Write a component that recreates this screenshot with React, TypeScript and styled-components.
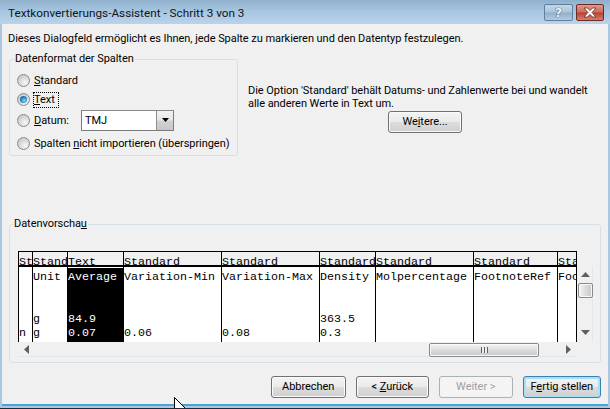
import styled, { createGlobalStyle } from "styled-components";

const GlobalStyle = createGlobalStyle`
  html, body {
    margin: 0;
    padding: 0;
    background: #a9c8e2;
  }
  * {
    box-sizing: border-box;
  }
`;

interface ColumnData {
  width: number;
  head: string;
  cells: string[];
  selected?: boolean;
}

const columns: ColumnData[] = [
  { width: 14, head: "Standard", cells: ["", "", "", "", "n"] },
  { width: 35, head: "Standard", cells: ["Unit", "", "", "g", "g"] },
  { width: 56, head: "Text", cells: ["Average", "", "", "84.9", "0.07"], selected: true },
  { width: 98, head: "Standard", cells: ["Variation-Min", "", "", "", "0.06"] },
  { width: 98, head: "Standard", cells: ["Variation-Max", "", "", "", "0.08"] },
  { width: 56, head: "Standard", cells: ["Density", "", "", "363.5", "0.3"] },
  { width: 98, head: "Standard", cells: ["Molpercentage", "", "", "", ""] },
  { width: 84, head: "Standard", cells: ["FootnoteRef", "", "", "", ""] },
  { width: 20, head: "Standard", cells: ["FootnoteRef", "", "", "", ""] },
];

const App = () => {
  return (
    <>
      <GlobalStyle />
      <Window>
        <TitleBar>
          <Title>Textkonvertierungs-Assistent - Schritt 3 von 3</Title>
          <HelpButton>?</HelpButton>
          <CloseButton>
            <svg width="16" height="11" viewBox="0 0 16 11">
              <path
                d="M2 1h3.5L8 3.6 10.5 1H14l-4 4.5L14 10h-3.5L8 7.4 5.5 10H2l4-4.5z"
                fill="#fff"
                stroke="#6e2a22"
                strokeWidth="0.8"
              />
            </svg>
          </CloseButton>
        </TitleBar>

        <Client>
          <Intro>
            Dieses Dialogfeld ermöglicht es Ihnen, jede Spalte zu markieren und den Datentyp festzulegen.
          </Intro>

          <UpperRow>
            <FormatGroup>
              <GroupTitle $offset={-3}>Datenformat der Spalten</GroupTitle>
              <RadioRow $height={20}>
                <Radio />
                <span><u>S</u>tandard</span>
              </RadioRow>
              <RadioRow $height={19}>
                <Radio $checked />
                <FocusLabel><u>T</u>ext</FocusLabel>
              </RadioRow>
              <RadioRow $height={22}>
                <Radio />
                <DateLabel><u>D</u>atum:</DateLabel>
                <Combo>
                  <ComboText>TMJ</ComboText>
                  <ComboButton>
                    <svg width="7" height="4" viewBox="0 0 7 4">
                      <path d="M0 0h7L3.5 4z" fill="#000" />
                    </svg>
                  </ComboButton>
                </Combo>
              </RadioRow>
              <RadioRow $height={24}>
                <Radio />
                <span>Spalten <u>n</u>icht importieren (überspringen)</span>
              </RadioRow>
            </FormatGroup>

            <HintColumn>
              <Hint>
                Die Option 'Standard' behält Datums- und Zahlenwerte bei und wandelt
                <br />
                alle anderen Werte in Text um.
              </Hint>
              <MoreButton>We<u>i</u>tere...</MoreButton>
            </HintColumn>
          </UpperRow>

          <PreviewGroup>
            <GroupTitle $offset={-5}>Datenvorscha<u>u</u></GroupTitle>
            <Preview>
              <Table>
                {columns.map((col, i) => (
                  <Column key={i} $width={col.width}>
                    <HeadCell>{col.head}</HeadCell>
                    <Body $selected={col.selected}>
                      {col.cells.map((c, j) => (
                        <Cell key={j}>{c}</Cell>
                      ))}
                    </Body>
                  </Column>
                ))}
              </Table>
              <VScroll>
                <svg width="9" height="5" viewBox="0 0 9 5">
                  <path d="M4.5 0L9 5H0z" fill="#5d6062" />
                </svg>
                <VThumb />
                <VSpacer />
                <svg width="9" height="5" viewBox="0 0 9 5">
                  <path d="M4.5 5L0 0h9z" fill="#5d6062" />
                </svg>
              </VScroll>
              <HScroll>
                <svg width="5" height="9" viewBox="0 0 5 9">
                  <path d="M0 4.5L5 0v9z" fill="#5d6062" />
                </svg>
                <HThumb>
                  <Gripper />
                </HThumb>
                <svg width="5" height="9" viewBox="0 0 5 9">
                  <path d="M5 4.5L0 0v9z" fill="#5d6062" />
                </svg>
              </HScroll>
            </Preview>
          </PreviewGroup>

          <Footer>
            <DialogButton $width={75}>Abbrechen</DialogButton>
            <DialogButton $width={74}>&lt; <u>Z</u>urück</DialogButton>
            <DialogButton $width={74} $disabled>Weiter &gt;</DialogButton>
            <DialogButton $width={79} $default>F<u>e</u>rtig stellen</DialogButton>
          </Footer>
        </Client>

        <Pointer width="14" height="14" viewBox="0 0 14 14">
          <path d="M0.5 0.5V14H6l2-2 3 2h3z" fill="#fff" stroke="#000" strokeWidth="1" />
        </Pointer>
      </Window>
    </>
  );
};

const uiFont = `Roboto, "Noto Sans", "Liberation Sans", sans-serif`;

const Window = styled.div`
  position: relative;
  width: 610px;
  height: 409px;
  overflow: hidden;
  display: flex;
  flex-direction: column;
  background: #a9c8e2;
  padding: 0 2px 2px 2px;
  border-bottom: 1px solid #1d2a38;
  font-family: ${uiFont};
  font-size: 11px;
  color: #000;
`;

const TitleBar = styled.div`
  height: 24px;
  margin: 0 -2px;
  padding: 4px 6px 0 8px;
  display: flex;
  align-items: flex-start;
  background: linear-gradient(to bottom, #8fb0cc 0%, #a6c5df 45%, #b9d3ea 100%);
`;

const Title = styled.div`
  flex: 1;
  padding-top: 1px;
  font-size: 11.75px;
  line-height: 17px;
  color: #10151a;
`;

const HelpButton = styled.div`
  width: 29px;
  height: 17px;
  margin-right: 3px;
  border: 1px solid #5f7f9c;
  border-radius: 2px;
  background: linear-gradient(to bottom, #c3d8ea 0%, #a9c5dc 48%, #8fb0cb 52%, #b2cbe0 100%);
  color: #eef3f7;
  font-family: "DejaVu Sans", sans-serif;
  font-size: 13px;
  font-weight: 700;
  line-height: 15px;
  text-align: center;
  text-shadow: 0 0 1px #33506a, 0 0 1px #33506a;
`;

const CloseButton = styled.div`
  width: 28px;
  height: 17px;
  border: 1px solid #6e2a22;
  border-radius: 2px;
  background: linear-gradient(to bottom, #dd9a8d 0%, #cd6a5a 48%, #b93f30 52%, #d4806f 100%);
  display: flex;
  align-items: center;
  justify-content: center;
`;

const Client = styled.div`
  flex: 1;
  display: flex;
  flex-direction: column;
  background: #f0f0f0;
  border-bottom: 2px solid #4aa3d8;
  padding: 6px 7px 0 6px;
  letter-spacing: -0.05px;
`;

const Intro = styled.div`
  height: 15px;
  padding-top: 1px;
  line-height: 15px;
  white-space: nowrap;
`;

const UpperRow = styled.div`
  display: flex;
  margin-top: 6px;
  height: 165px;
`;

const GroupBox = styled.fieldset`
  flex: none;
  margin: 0 0 0 1px;
  padding: 0;
  min-width: 0;
  border: 1px solid #d6dfe6;
  border-radius: 3px;
`;

const GroupTitle = styled.legend<{ $offset: number }>`
  margin-left: ${({ $offset }) => $offset}px;
  padding: 0 1px;
  height: 16px;
  line-height: 16px;
`;

const FormatGroup = styled(GroupBox)`
  width: 229px;
  height: 105px;
  padding: 3px 0 0 7px;
`;

const RadioRow = styled.div<{ $height: number }>`
  height: ${({ $height }) => $height}px;
  display: flex;
  align-items: center;
  white-space: nowrap;
`;

const Radio = styled.div<{ $checked?: boolean }>`
  position: relative;
  flex: none;
  width: 13px;
  height: 13px;
  margin-right: 4px;
  border-radius: 50%;
  border: 1px solid #8a8b8b;
  background: radial-gradient(circle at 65% 70%, #f6f6f6 0%, #dcdcdc 45%, #bdbdbd 100%);

  ${({ $checked }) =>
    $checked &&
    `
    &::after {
      content: "";
      position: absolute;
      left: 2px;
      top: 2px;
      width: 7px;
      height: 7px;
      border-radius: 50%;
      background: radial-gradient(circle at 60% 65%, #7fdcff 0%, #1a7fc0 55%, #0e4f80 100%);
    }
  `}
`;

const FocusLabel = styled.span`
  margin-left: -1px;
  padding: 0 0 0 1px;
  width: 26px;
  height: 16px;
  line-height: 15px;
  outline: 1px dotted #000;
  outline-offset: -1px;
`;

const DateLabel = styled.span`
  width: 47px;
`;

const Combo = styled.div`
  width: 93px;
  height: 21px;
  display: flex;
  background: #fff;
  border: 1px solid #7c7c7c;
  border-top-color: #8a8a8a;
`;

const ComboText = styled.div`
  flex: 1;
  padding-left: 3px;
  line-height: 19px;
`;

const ComboButton = styled.div`
  width: 17px;
  display: flex;
  align-items: center;
  justify-content: center;
  border-left: 1px solid #8d8d8d;
  background: linear-gradient(to bottom, #f3f3f3 0%, #e6e6e6 48%, #d2d2d2 52%, #c6c6c6 100%);
`;

const HintColumn = styled.div`
  margin-left: 10px;
  padding-top: 33px;
  display: flex;
  flex-direction: column;
`;

const Hint = styled.div`
  line-height: 13px;
  white-space: nowrap;
`;

const buttonBase = `
  border-radius: 3px;
  text-align: center;
  line-height: 20px;
  background: linear-gradient(to bottom, #f3f3f3 0%, #ebebeb 48%, #dddddd 52%, #cfcfcf 100%);
  border: 1px solid #707070;
  box-shadow: inset 0 0 0 1px #fbfbfb;
  white-space: nowrap;
`;

const MoreButton = styled.div`
  ${buttonBase}
  width: 74px;
  height: 22px;
  margin: 1px 0 0 140px;
`;

const PreviewGroup = styled(GroupBox)`
  width: 592px;
  height: 147px;
  padding: 19px 0 0 8px;
`;

const Preview = styled.div`
  display: grid;
  grid-template-columns: 559px 16px;
  grid-template-rows: 91px 15px;
`;

const Table = styled.div`
  display: flex;
  overflow: hidden;
  border-right: 1px solid #000;
  grid-row: 1;
  grid-column: 1;
  position: relative;
  font-family: "Liberation Mono", monospace;
  font-size: 11.67px;
  letter-spacing: 0;
`;

const Column = styled.div<{ $width: number }>`
  flex: none;
  width: ${({ $width }) => $width}px;
  display: flex;
  flex-direction: column;
  border-left: 1px solid #000;
  overflow: hidden;

  &:last-child {
    flex: 1;
  }
`;

const HeadCell = styled.div`
  flex: none;
  height: 16px;
  line-height: 21px;
  border-top: 1px solid #000;
  border-bottom: 2px solid #000;
  background: #f0f0f0;
  white-space: nowrap;
  overflow: hidden;
`;

const Body = styled.div<{ $selected?: boolean }>`
  flex: 1;
  padding-top: 3px;
  background: #fff;
  white-space: nowrap;
  ${({ $selected }) => $selected && `
    background: #000;
    color: #fff;
    border-top: 1px solid #fff;
    padding-top: 2px;
  `}
`;

const Cell = styled.div`
  height: 14px;
  line-height: 14px;
`;

const VScroll = styled.div`
  grid-row: 1;
  grid-column: 2;
  margin: 15px 0 0 1px;
  display: flex;
  flex-direction: column;
  align-items: center;
  padding: 6px 0 7px;
  background: #f0f0f0;
  border-right: 1px solid #e6e6e6;
`;

const VThumb = styled.div`
  width: 15px;
  height: 15px;
  margin-top: 6px;
  border: 1px solid #8a8a8a;
  border-radius: 2px;
  background: linear-gradient(to right, #f5f5f5, #dcdcdc 50%, #c8c8c8);
  box-shadow: inset 0 0 0 1px #f8f8f8;
`;

const VSpacer = styled.div`
  flex: 1;
`;

const HScroll = styled.div`
  grid-row: 2;
  grid-column: 1;
  display: flex;
  align-items: center;
  justify-content: space-between;
  padding: 0 6px;
  position: relative;
  background: #f0f0f0;
  border-bottom: 1px solid #e6e6e6;
`;

const HThumb = styled.div`
  position: absolute;
  left: 411px;
  top: 1px;
  width: 110px;
  height: 14px;
  display: flex;
  align-items: center;
  justify-content: center;
  border: 1px solid #8a8a8a;
  border-radius: 2px;
  background: linear-gradient(to bottom, #f5f5f5, #dcdcdc 50%, #c8c8c8);
  box-shadow: inset 0 0 0 1px #f8f8f8;
`;

const Gripper = styled.div`
  width: 7px;
  height: 6px;
  background: repeating-linear-gradient(to right, #5d6062 0 1px, #eee 1px 3px);
`;

const Footer = styled.div`
  margin-top: 13px;
  padding-left: 263px;
  display: flex;
  gap: 10px;
`;

const DialogButton = styled.div<{ $width: number; $disabled?: boolean; $default?: boolean }>`
  ${buttonBase}
  width: ${({ $width }) => $width}px;
  height: 22px;
  ${({ $disabled }) => $disabled && `
    background: #f4f4f4;
    border-color: #adb2b5;
    box-shadow: none;
    color: #a0a0a0;
  `}
  ${({ $default }) => $default && `
    border-color: #3c7fb1;
    box-shadow: inset 0 0 0 2px #a6e0f5;
  `}
`;

const Pointer = styled.svg`
  position: absolute;
  left: 174px;
  top: 397px;
`;

export default App;
